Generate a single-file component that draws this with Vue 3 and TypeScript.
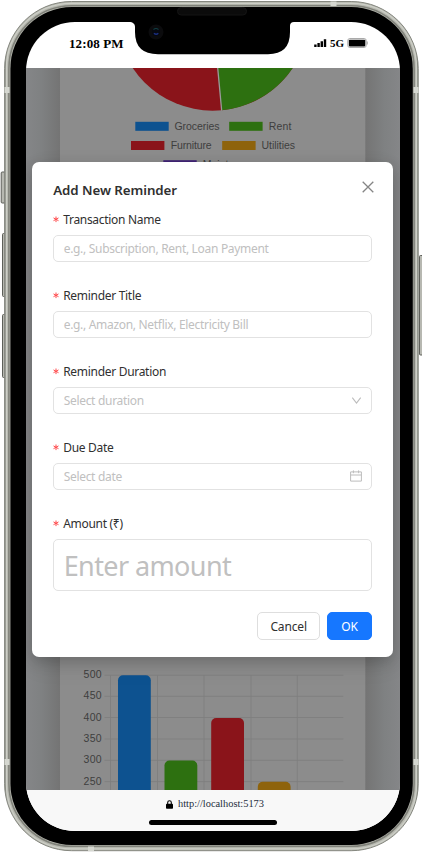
<script setup lang="ts">
interface Field {
  label: string
  hint: string
  icon?: 'chevron' | 'calendar'
  large?: boolean
}

const fields: Field[] = [
  { label: 'Transaction Name', hint: 'e.g., Subscription, Rent, Loan Payment' },
  { label: 'Reminder Title', hint: 'e.g., Amazon, Netflix, Electricity Bill' },
  { label: 'Reminder Duration', hint: 'Select duration', icon: 'chevron' },
  { label: 'Due Date', hint: 'Select date', icon: 'calendar' },
  { label: 'Amount (₹)', hint: 'Enter amount', large: true },
]

const ticks = [
  { value: 500, y: 675.3 },
  { value: 450, y: 696.4 },
  { value: 400, y: 717.5 },
  { value: 350, y: 739 },
  { value: 300, y: 760.4 },
  { value: 250, y: 781.6 },
]
const columns = [110.5, 157.5, 204, 251, 297.3]
const bars = [
  { x: 118, y: 675.3, color: '#0d5290' },
  { x: 164.5, y: 760.6, color: '#2d7010' },
  { x: 211.2, y: 718, color: '#8a141a' },
  { x: 257.8, y: 781.8, color: '#8e630c' },
]
const legend = [
  { x: 135.3, y: 121.8, color: '#0d5290', label: 'Groceries', tx: 174.5, width: 45 },
  { x: 229.2, y: 121.8, color: '#2d7010', label: 'Rent', tx: 268.8, width: 22.5 },
  { x: 131, y: 141, color: '#8a141a', label: 'Furniture', tx: 170.7, width: 41 },
  { x: 222.2, y: 141, color: '#8e630c', label: 'Utilities', tx: 261.5, width: 33.5 },
  { x: 163.3, y: 160.2, color: '#402475', label: 'Maintenance', tx: 202.7, width: 60 },
]
</script>

<template>
  <main class="device">
    <svg class="shell" viewBox="0 0 422 852" aria-hidden="true">
      <defs>
        <linearGradient id="rim" x1="0" x2="1" y1="0" y2="0">
          <stop offset="0" stop-color="#777971" />
          <stop offset=".006" stop-color="#b9bab2" />
          <stop offset=".5" stop-color="#b0b3a8" />
          <stop offset=".994" stop-color="#b9bab2" />
          <stop offset="1" stop-color="#777971" />
        </linearGradient>
      </defs>
      <g fill="#b7b8b1" stroke="#5d5f59">
        <rect x="1.2" y="172" width="5" height="31" rx="1" />
        <rect x="2.5" y="233.5" width="4" height="63" rx="1" />
        <rect x="2.5" y="314.5" width="4" height="63" rx="1" />
        <rect x="419.5" y="255.5" width="4" height="99.5" rx="1" />
      </g>
      <rect x="4.6" y="1.5" width="413.6" height="849.2" rx="67" fill="url(#rim)" stroke="#85877f" />
      <rect x="6.4" y="3.3" width="410.2" height="845.6" rx="65" fill="none" stroke="#cdcfc7" stroke-width="1.2" />
      <rect x="8.9" y="5.7" width="405.2" height="840.6" rx="63" fill="none" stroke="#80827a" stroke-width="1.6" />
      <rect x="10.4" y="7" width="402.4" height="838" rx="61.5" />
      <g fill="#d5d7d0">
        <path d="M4.5 87h5v6h-5zM413.5 87h5v6h-5zM4.5 759h5v6h-5zM413.5 759h5v6h-5zM330.5 1.5h6v4.5h-6zM88 846.5h6v4.5h-6z" />
      </g>
    </svg>

    <section class="screen">
      <header class="status">
        <span class="clock">12:08 PM</span>
        <span class="network">
          <svg width="13" height="10" viewBox="0 0 13 10">
            <path d="M.2 6.5h2.4V9H.2zM3.4 5h2.4v4H3.4zM6.6 3.3H9V9H6.6zM9.8 1.3h2.4V9H9.8z" />
          </svg>
          <b>5G</b>
          <svg width="22" height="12" viewBox="0 0 22 12">
            <rect x=".8" y=".5" width="18.4" height="9" rx="2" fill="#fff" stroke="#aaa" />
            <rect x="1.8" y="1.7" width="16.5" height="6.7" rx=".8" />
            <path d="M20.3 3.5v3" stroke="#aaa" />
          </svg>
        </span>
      </header>

      <div class="viewport">
        <svg class="page" viewBox="26 68 374 722">
          <defs>
            <linearGradient id="leftShade">
              <stop stop-color="#858688" />
              <stop offset=".45" stop-color="#7f8182" />
              <stop offset="1" stop-color="#747474" />
            </linearGradient>
            <linearGradient id="rightShade">
              <stop stop-color="#747474" />
              <stop offset=".55" stop-color="#7f8182" />
              <stop offset="1" stop-color="#858688" />
            </linearGradient>
          </defs>
          <rect x="26" y="68" width="374" height="722" fill="#8c8c8c" />
          <rect x="26" y="68" width="34" height="722" fill="url(#leftShade)" />
          <rect x="365.3" y="68" width="34.7" height="722" fill="url(#rightShade)" />
          <circle cx="212.7" cy="14.4" r="96.3" fill="#8a141a" />
          <path d="M212.7 14.4 221.7 110.3A96.3 96.3 0 0 0 309 14.4Z" fill="#2d7010" />
          <path d="M212.7 14.4 221.7 110.7" stroke="#9a9a9a" stroke-width="1.3" />
          <g v-for="item in legend" :key="item.label">
            <rect :x="item.x" :y="item.y" width="33.4" height="9" :fill="item.color" />
            <text class="chart-text" :x="item.tx" :y="item.y + 7.7" :textLength="item.width">{{ item.label }}</text>
          </g>
          <g stroke="#7e7e7e" stroke-width=".8">
            <path v-for="t in ticks" :key="t.value" :d="`M104.5 ${t.y}H343.3`" />
            <path v-for="c in columns" :key="c" :d="`M${c} 675.3V790`" />
          </g>
          <text v-for="t in ticks" :key="t.value" class="chart-text" x="101.6" :y="t.y + 3" text-anchor="end" textLength="18">{{ t.value }}</text>
          <rect v-for="bar in bars" :key="bar.x" :x="bar.x" :y="bar.y" width="32.8" height="150" rx="5" :fill="bar.color" />
        </svg>

        <form class="modal" @submit.prevent>
          <div class="heading">
            <h1>Add New Reminder</h1>
            <svg width="14" height="14" viewBox="0 0 14 14"><path d="m1.7 1.7 10.6 10.6m0-10.6L1.7 12.3" fill="none" stroke="#858585" stroke-width="1.3" /></svg>
          </div>
          <div v-for="field in fields" :key="field.label" class="field">
            <label><svg class="star" width="7" height="7" viewBox="0 0 7 7"><path d="M3 .5v5.6M.5 1.9l5 2.8M5.5 1.9l-5 2.8" stroke="#ff4d4f" /></svg><span>{{ field.label }}</span></label>
            <div class="control" :class="{ large: field.large }">
              <span>{{ field.hint }}</span>
              <svg v-if="field.icon === 'chevron'" width="12" height="12" viewBox="0 0 12 12"><path d="m2.3 2.7 4.2 5.5 4.2-5.5" fill="none" stroke="#bcbcbc" stroke-width="1.1" /></svg>
              <svg v-if="field.icon === 'calendar'" width="12" height="12" viewBox="0 0 12 12"><path d="M.6 1.9h10.8v9.2H.6zM.6 5h10.8M3.4.4v2.8M8.6.4v2.8" fill="none" stroke="#bcbcbc" /></svg>
            </div>
          </div>
          <footer class="actions">
            <button class="cancel" type="button">Cancel</button>
            <button class="confirm" type="submit">OK</button>
          </footer>
        </form>
      </div>

      <footer class="browser">
        <div class="address">
          <svg width="7" height="9" viewBox="0 0 7 9"><path d="M1.7 4V2.5a1.8 1.8 0 0 1 3.6 0V4" fill="none" stroke="#000" stroke-width="1.1" /><rect y="3.7" width="7" height="5" rx=".8" /></svg>
          <span>http://localhost:5173</span>
        </div>
        <div class="home"></div>
      </footer>
    </section>

    <svg class="notch" viewBox="0 0 422 60" aria-hidden="true">
      <path d="M129 20V22C133 22 135 24 135 27V32Q135 54.2 158 54.2H268Q290 54.2 290 32V26Q290 22 294 22V20Z" />
      <rect x="177.5" y="7.5" width="69" height="7.5" rx="3.7" fill="#0b0b0b" stroke="#151515" />
      <circle cx="156" cy="32" r="7.5" fill="#0b0b0d" />
      <circle cx="156" cy="32" r="4" fill="#060810" />
      <path d="M153.5 29.5q2.5-2 5 0" fill="none" stroke="#123f42" stroke-width="1.2" />
      <path d="M153.9 33.2q2.3 2 4.4 0" fill="none" stroke="#1b2f80" stroke-width="1.3" />
    </svg>
  </main>
</template>

<style>
body {
  background: #fff;
}
</style>

<style scoped>
.device {
  position: relative;
  box-sizing: border-box;
  width: 422px;
  height: 852px;
  padding: 22px 22px 21px 26px;
  overflow: hidden;
}
.shell,
.notch {
  position: absolute;
  top: 0;
  left: 0;
  width: 422px;
}
.screen {
  position: relative;
  display: flex;
  flex-direction: column;
  width: 374px;
  height: 809px;
  overflow: hidden;
  border-radius: 49px;
  background: #fff;
}
.status {
  box-sizing: border-box;
  display: flex;
  justify-content: space-between;
  height: 46px;
  padding: 14px 31px 0 43px;
}
.clock {
  font: bold 13px/15px "Liberation Serif", serif;
  letter-spacing: 0.1px;
}
.network {
  display: flex;
  gap: 3px;
}
.network svg {
  margin-top: 1.5px;
}
.network b {
  font: bold 11px/14px "Liberation Serif", serif;
}
.viewport {
  position: relative;
  box-sizing: border-box;
  height: 722px;
  padding: 94.4px 7px 0 6.4px;
  overflow: hidden;
}
.page {
  position: absolute;
  inset: 0;
  width: 374px;
  height: 722px;
}
.chart-text {
  fill: #3e3e3e;
  font: 10.5px "Liberation Sans", sans-serif;
}
.modal {
  position: relative;
  box-sizing: border-box;
  height: 495px;
  padding: 17px 21.3px 0 20.8px;
  border-radius: 7px;
  background: #fff;
  box-shadow: 0 5px 14px rgb(0 0 0 / 16%), 0 8px 25px rgb(0 0 0 / 8%);
  color: #303030;
  font: 12px/22px "Noto Sans", sans-serif;
}
.heading {
  display: flex;
  justify-content: space-between;
  height: 28.8px;
}
h1 {
  margin: 0;
  font: 600 13.3px/23px "Noto Sans", sans-serif;
  letter-spacing: -0.06px;
}
.heading svg {
  margin: 0.5px -3.5px 0 0;
}
.field {
  margin-bottom: 21.8px;
}
label {
  display: flex;
  align-items: center;
  height: 22px;
  letter-spacing: -0.3px;
}
label span {
  padding-top: 1px;
}
.star {
  margin-right: 3px;
}
.control {
  box-sizing: border-box;
  display: flex;
  align-items: center;
  justify-content: space-between;
  height: 27.7px;
  margin-top: 4.5px;
  padding: 0 9px 0 9.5px;
  border: 1px solid #e2e2e2;
  border-radius: 5px;
  color: #c0c0c0;
  letter-spacing: -0.31px;
}
.control span {
  padding-top: 1px;
}
.large {
  height: 52px;
  font-size: 27px;
  letter-spacing: -0.6px;
}
.large span {
  padding-top: 3px;
}
.actions {
  display: flex;
  justify-content: flex-end;
  gap: 7px;
  margin-top: -0.5px;
}
button {
  box-sizing: border-box;
  height: 28px;
  padding: 3px 0 0;
  border: 1px solid #dedede;
  border-radius: 5px;
  background: #fff;
  color: #303030;
  font: 12px/22px "Noto Sans", sans-serif;
  letter-spacing: -0.15px;
}
.cancel {
  width: 63.5px;
}
.confirm {
  width: 44.3px;
  border-color: #1677ff;
  background: #1677ff;
  color: #fff;
}
.browser {
  display: flex;
  flex-direction: column;
  align-items: center;
  height: 41px;
  background: #f8f8f8;
}
.address {
  display: flex;
  align-items: center;
  gap: 5px;
  height: 28px;
  padding-left: 4px;
  color: #1d2d3c;
  font: 10.4px/12px "Liberation Serif", serif;
}
.home {
  width: 128px;
  height: 5px;
  margin-top: 2px;
  border-radius: 3px;
  background: #000;
}
</style>
